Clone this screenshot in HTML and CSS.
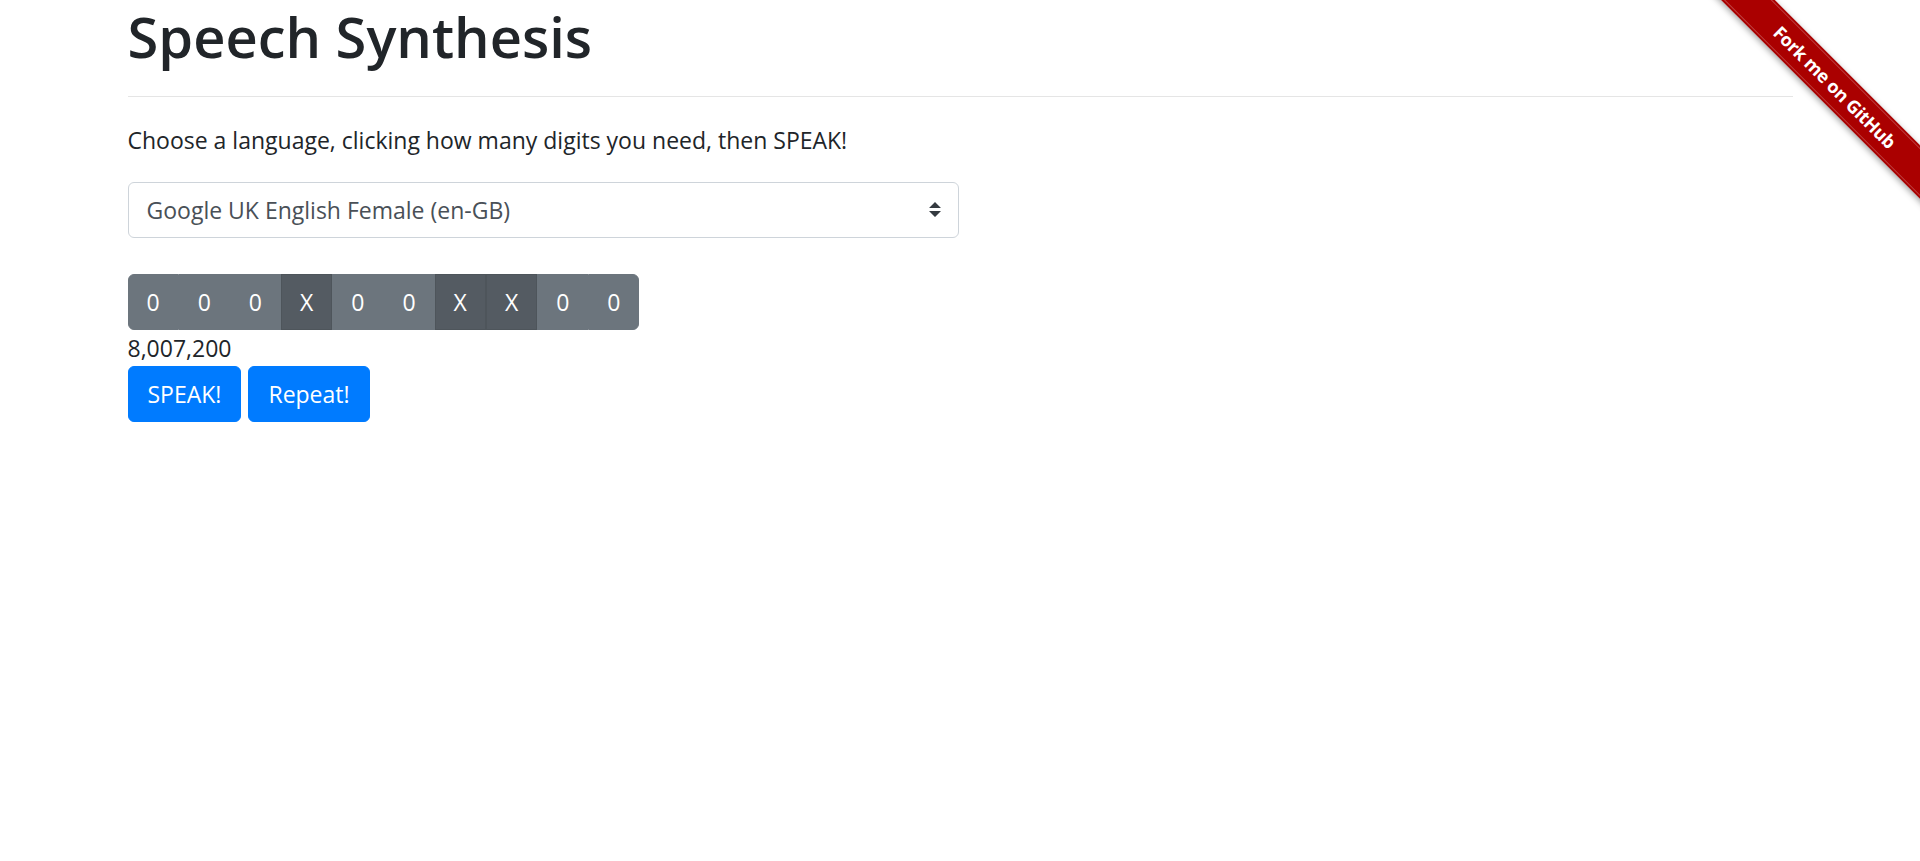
FILE: index.html
```html
<!DOCTYPE html>
<html lang="en">
<head>
<meta charset="utf-8">
<title>Speech Synthesis</title>
<link rel="stylesheet" href="styles.css">
</head>
<body>
<div class="ribbon-wrap">
  <a class="ribbon" href="#">Fork me on GitHub</a>
</div>
<div class="container">
  <h1 class="title">Speech Synthesis</h1>
  <hr class="rule">
  <p class="lead-text">Choose a language, clicking how many digits you need, then SPEAK!</p>
  <div class="select-wrap">
    <select class="voice-select">
      <option>Google UK English Female (en-GB)</option>
    </select>
    <svg class="select-arrow" viewBox="0 0 4 5" width="12" height="15"><path d="M2 0L0 2h4zm0 5L0 3h4z" fill="#343a40"/></svg>
  </div>
  <div class="digits">
    <button class="digit">0</button>
    <button class="digit">0</button>
    <button class="digit">0</button>
    <button class="digit active">X</button>
    <button class="digit">0</button>
    <button class="digit">0</button>
    <button class="digit active">X</button>
    <button class="digit active">X</button>
    <button class="digit">0</button>
    <button class="digit">0</button>
  </div>
  <div class="number">8,007,200</div>
  <div class="actions">
    <button class="btn-primary">SPEAK!</button>
    <button class="btn-primary">Repeat!</button>
  </div>
</div>
</body>
</html>
```

FILE: styles.css
```css
html, body {
  margin: 0;
  padding: 0;
  background: #fff;
}
body {
  font-family: "Open Sans", "Noto Sans", sans-serif;
  font-size: 23px;
  line-height: 36px;
  color: #212529;
  overflow: hidden;
}
.container {
  max-width: 1665px;
  margin: 0 auto;
  padding: 0 22.5px;
}
.title {
  margin: 0 0 12px;
  font-size: 56px;
  font-weight: 600;
  line-height: 72px;
}
.rule {
  margin: 24px 0 25px;
  border: 0;
  border-top: 1px solid rgba(0,0,0,0.1);
  height: 0;
}
.lead-text {
  margin: 0 0 24px;
}
.select-wrap {
  position: relative;
  width: 831px;
  margin-bottom: 36px;
}
.voice-select {
  display: block;
  width: 100%;
  height: 56px;
  padding: 9px 42px 9px 18px;
  font-family: inherit;
  font-size: 23px;
  line-height: 36px;
  color: #495057;
  background: #fff;
  border: 1px solid #ced4da;
  border-radius: 6px;
  -webkit-appearance: none;
  appearance: none;
}
.select-arrow {
  position: absolute;
  right: 18px;
  top: 20px;
  pointer-events: none;
}
.digits {
  display: inline-flex;
  vertical-align: top;
}
.digit {
  box-sizing: border-box;
  height: 56px;
  font-family: inherit;
  font-size: 23px;
  line-height: 36px;
  padding: 9px 18px;
  color: #fff;
  background: #6c757d;
  border: 1px solid #6c757d;
  border-radius: 0;
  margin: 0;
}
.digit:first-child {
  border-radius: 6px 0 0 6px;
}
.digit:last-child {
  border-radius: 0 6px 6px 0;
}
.digit.active {
  background: #545b62;
  border-color: #4e555b;
}
.number {
  line-height: 36px;
}
.actions {
  display: flex;
  gap: 7px;
}
.btn-primary {
  box-sizing: border-box;
  height: 56px;
  font-family: inherit;
  font-size: 23px;
  line-height: 36px;
  padding: 9px 19px;
  color: #fff;
  background: #007bff;
  border: 1px solid #007bff;
  border-radius: 6px;
}
.ribbon-wrap {
  position: absolute;
  top: 0;
  right: 0;
  width: 224px;
  height: 224px;
  overflow: hidden;
}
.ribbon {
  position: absolute;
  left: -21px;
  top: 67.5px;
  width: 320px;
  height: 38px;
  transform: rotate(45deg);
  background: #aa0000;
  box-shadow: 0 2px 6px rgba(0,0,0,0.35);
  color: #fff;
  text-align: center;
  text-decoration: none;
  font-family: "Open Sans", sans-serif;
  font-weight: 700;
  font-size: 18px;
  line-height: 38px;
  letter-spacing: -0.3px;
}
.ribbon::before {
  content: "";
  position: absolute;
  left: 0;
  right: 0;
  top: 2px;
  bottom: 2px;
  border-top: 1px solid rgba(255,255,255,0.25);
  border-bottom: 1px solid rgba(255,255,255,0.25);
}
```
